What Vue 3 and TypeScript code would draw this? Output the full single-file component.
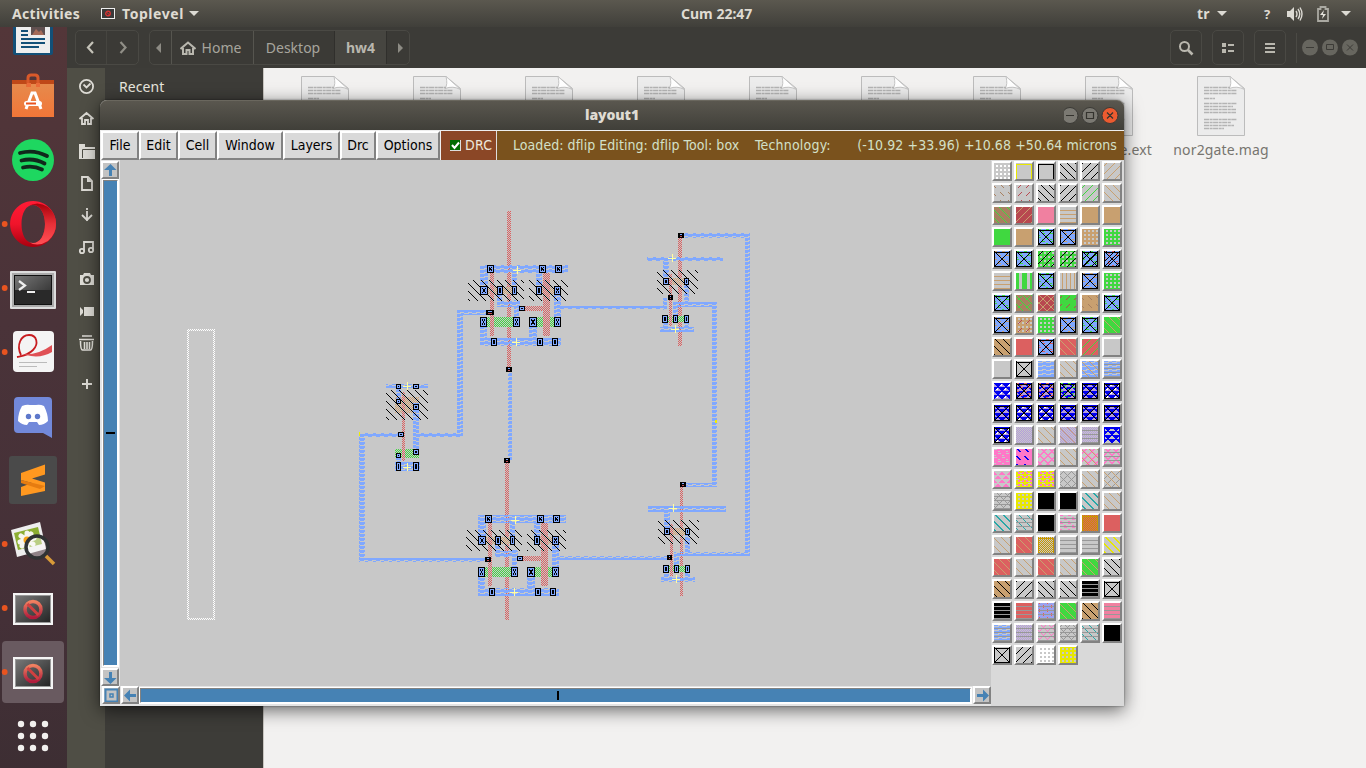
<script setup lang="ts">
type Box = [number, number, number, number]

const menus = [
  { t: 'File', w: 38 }, { t: 'Edit', w: 39 }, { t: 'Cell', w: 39 }, { t: 'Window', w: 66 },
  { t: 'Layers', w: 57 }, { t: 'Drc', w: 36 }, { t: 'Options', w: 64 },
]
const files = ['', '', '', '', '', '', '', 'nor2gate.ext', 'nor2gate.mag']

const colors: Record<string, string> = {
  k: '#000', g: '#40d840', t: '#c8a070', r: '#dc6060', R: '#b84850', n: '#a88060', b: '#80a8ff', B: '#0000f0',
  p: '#ff78c8', P: '#f080a0', y: '#e8e800', Y: '#c89800', e: '#989898', l: '#b49cdc', T: '#28a8a8', W: '#fff', c: '#c8c8c8',
}

/* One string per palette row: cells split by commas, layers by spaces; operator letter, then colour letter. */
const palette: string[] = [
  'qW,by,bk,dk,sk,st',
  'Dn,SR,dk,sk,sg,dt',
  'fn dg,fR st,fP,ht,ft,ft',
  'fg,ft,fb ig xk,fb it xk,ft oc,fg oc',
  'fb it xk,fb ig xk,fg oc sk,fg oc SR sk,fb ig xk sk,fb ir xk sk',
  'ht,fg uc,fb ig xk,vt,fb it xk,fg oc',
  'fb ig xk,fn dg Sg,fR dt st,fg SR,ft Dn,fb ig xk',
  'fb it xk,ft oc SR,fg oc,fb it xk,fb ig xk,fg dt',
  'ft dk,fr,fb ir xk,fr dt,fr sg,fc',
  'fc,xk,mb,dt,mb dt,mb he',
  'fl oW wB,fl wB ir xk,fl wB ir xk,fl wB ig xk,fl wB xk,fl oW wB xk',
  'fl ig wB xk,fl oW wB xk,fl oW wB xk,fl wB xk,fl wB xk,fl ig wB xk',
  'fl oW wB xk,cl,dt,cl dt,cl he,wB bB',
  'fp ic,fp DB NB,ap zp,dt,ap dt zp,ap zp he',
  'fp wc,fy op ic,fy op ic,ae,dt,ae dt',
  'ae he,fy oc,fk,fk,dT nT,dt',
  'dT nT,dT he,fk,hk ip he,fr cY bY,fr',
  'dt,fr dt,cY bY,he,he,dy ny',
  'fr dt,dt,fr dt,dt,fg dt,dk',
  'ft dk,sk,dk,dk,fk he,xk',
  'fk he,fr he,fb ir cl he,fg dt,ft dk,fP he',
  'mb he,cl he,ap he,ae he,dT he,fk',
  'xk,sk,fW oc,fy oc',
]
const swatches = palette.flatMap(row => row.split(',').map(c => c.split(' ')))

/* Diagonal stipples are aligned to the screen (X, Y); the others to the swatch (x, y). */
function lit(op: string, x: number, y: number, X: number, Y: number): boolean {
  const down = (X - Y) % 8
  const up = (X + Y) % 8
  switch (op) {
    case 'f': return true
    case 'd': return down === 0
    case 'n': return down === 1
    case 's': return up === 5
    case 'D': return down === 0 && Y % 8 < 4
    case 'N': return down === 1 && Y % 8 < 4
    case 'S': return up === 5 && Y % 8 < 4
    case 'h': return y % 4 === 3
    case 'v': return x % 4 === 2
    case 'u': return (x >= 3 && x < 6) || (x >= 11 && x < 14)
    case 'b': return y > 0 && (x === 0 || x === 15 || y === 1)
    case 'x': return x === 0 || x === 15 || y === 1 || y === 15 || x === y || x + y === 15
    case 'm': return y % 4 === 2 || y % 4 === 3 || (y % 4 === 0 && x % 8 < 4) || (y % 4 === 1 && x % 8 > 4)
    case 'o': return x % 4 >= 2 && (y % 4 === 1 || y % 4 === 2)
    case 'q': return x % 4 > 1 && y % 4 > 1
    case 'i': return (y % 4 === 0 && (x + y) % 8 < 3) || (y % 4 === 2 && (x + y) % 8 > 5)
    case 'c': return (X + Y) % 2 === 1
    case 'w': {
      const c = (x + (Math.floor(y / 4) % 2) * 4) % 8
      return Math.abs(c - 3.5) < 4 - (y % 4)
    }
    case 'a': return down === 0 || up === 6
    case 'z': return down === 1 || up === 7
  }
  return false
}
const cache: Record<string, string> = {}
function cells(op: string, index: number): string {
  const ox = 994 + (index % 6) * 22
  const oy = 163 + Math.floor(index / 6) * 22
  const key = `${op}${ox % 8}${oy % 8}`
  if (cache[key]) return cache[key]
  const on = (x: number, y: number) => lit(op, x, y, ox + x, oy + y)
  let d = ''
  for (let y = 0; y < 16; y++) {
    for (let x = 0; x < 16; x++) {
      if (!on(x, y)) continue
      const start = x
      while (x < 16 && on(x, y)) x++
      d += `M${start} ${y}h${x - start}v1h${start - x}z`
    }
  }
  return (cache[key] = d)
}

interface Cell { dx: number; dy: number; metal: Box[]; poly: Box[]; ndiff: Box[]; pdiff: Box[]; well: Box[]; contacts: Box[]; marks: [number, number][] }
const flop = {
  metal: [[480, 265, 88, 8], [480, 265, 8, 26], [512, 272, 5, 20], [536, 272, 6, 20], [497, 287, 5, 20], [497, 301, 23, 6], [514, 300, 5, 22], [554, 287, 7, 35],
    [480, 338, 81, 8], [480, 317, 7, 29], [529, 317, 8, 23]] as Box[],
  poly: [[490, 272, 4, 64], [543, 273, 7, 63], [520, 306, 25, 5]] as Box[],
  ndiff: [[485, 317, 31, 10], [533, 317, 24, 10]] as Box[],
  pdiff: [[486, 287, 26, 7], [540, 287, 15, 7]] as Box[],
  well: [[468, 280, 56, 21], [529, 280, 39, 21]] as Box[],
  contacts: [[487, 265, 7, 8], [539, 265, 7, 8], [555, 265, 7, 8], [480, 286, 8, 9], [497, 286, 6, 9], [512, 286, 5, 9], [536, 286, 6, 9], [554, 286, 7, 9],
    [519, 306, 6, 5], [480, 317, 7, 10], [513, 317, 7, 10], [529, 317, 8, 10], [554, 317, 7, 10], [491, 338, 6, 8], [537, 338, 6, 8], [552, 338, 6, 8]] as Box[],
  marks: [[517, 270], [516, 342]] as [number, number][],
}
const gate = {
  metal: [[663, 260, 6, 24], [684, 282, 5, 20], [663, 298, 4, 12], [673, 302, 44, 5], [673, 302, 5, 18], [660, 327, 34, 5], [663, 320, 5, 10], [684, 320, 5, 10]] as Box[],
  poly: [[669, 274, 3, 52]] as Box[],
  ndiff: [[668, 316, 17, 6]] as Box[],
  pdiff: [[672, 278, 13, 7]] as Box[],
  well: [[657, 270, 41, 24]] as Box[],
  contacts: [[663, 278, 6, 7], [684, 278, 5, 7], [662, 315, 6, 8], [673, 315, 5, 8], [684, 315, 5, 8]] as Box[],
  marks: [[672, 258], [675, 329]] as [number, number][],
}
const gate2 = { ...gate, metal: gate.metal.filter((_, i) => i !== 3 && i !== 2) }
const inv: Cell = {
  dx: 0, dy: 0,
  metal: [[386, 384, 42, 4], [396, 386, 5, 16], [413, 403, 6, 50], [395, 462, 25, 9], [396, 456, 5, 6]],
  poly: [[402, 392, 3, 69]], ndiff: [[395, 449, 24, 9]], pdiff: [[395, 397, 24, 16]], well: [[386, 390, 42, 30]],
  contacts: [[396, 384, 5, 5], [413, 384, 6, 5], [396, 399, 5, 5], [413, 404, 6, 6], [398, 432, 6, 5], [396, 453, 5, 5], [413, 449, 6, 6], [396, 462, 5, 9], [413, 462, 6, 9]],
  marks: [[407, 386], [407, 467]],
}
const wires: Box[] = [
  [457, 310, 33, 5], [457, 310, 6, 127], [554, 306, 112, 3], [508, 369, 4, 92], [416, 433, 47, 4], [359, 433, 41, 4], [359, 437, 6, 125], [359, 558, 128, 4],
  [552, 556, 117, 4], [680, 233, 70, 5], [745, 234, 5, 322], [674, 552, 76, 4], [647, 257, 76, 4], [712, 302, 5, 185], [682, 483, 35, 4], [648, 506, 78, 6],
]
const polyLines: Box[] = [[507, 211, 4, 160], [505, 460, 4, 160], [678, 236, 4, 110], [680, 484, 3, 112]]
const loose: Box[] = [[506, 367, 6, 5], [504, 458, 6, 5], [678, 233, 6, 5], [680, 482, 6, 5], [486, 310, 8, 5], [485, 557, 6, 5], [668, 295, 5, 5], [667, 555, 5, 5]]
const layoutCells: Cell[] = [
  { dx: 0, dy: 0, ...flop }, { dx: -2, dy: 250, ...flop }, { dx: 0, dy: 0, ...gate }, { dx: 1, dy: 250, ...gate2 }, inv,
]
const kinds = [['pdiff', 'pd'], ['ndiff', 'nd'], ['poly', 'po'], ['metal', 'me'], ['well', 'we']] as const
</script>

<template>
  <div class="desktop">
    <header class="topbar">
      <span class="act">Activities</span>
      <svg class="appicon" width="14" height="11"><rect x=".5" y=".5" width="13" height="10" fill="#3a3a3a" stroke="#eee" /><circle cx="7" cy="5.500" r="2.300" fill="none" stroke="#d33" stroke-width="1.300" /><path d="M5.500 4l3 3" stroke="#d33" /></svg>
      <span class="top">Toplevel</span><i class="caret" />
      <span class="clock">Cum 22:47</span>
      <span class="lang">tr</span><i class="caret" />
      <span class="q">?</span>
      <svg class="vol" width="17" height="16"><path d="M1 5h3l4-4v14l-4-4H1z" fill="#dcdad3" /><path d="M10 5q2 3 0 6M12 3q3.500 5 0 10M14 1.500q4 6.500 0 13" fill="none" stroke="#dcdad3" stroke-width="1.400" /></svg>
      <svg class="bat" width="12" height="16"><path d="M1 3h2.500V1h5v2H11v12H1z" fill="none" stroke="#aaa9a2" stroke-width="1.800" /><path d="M7 4L3 9h3l-1 4 4-5H6z" fill="#e5e3dc" /></svg>
      <i class="caret last" />
    </header>

    <nav class="dock">
      <svg width="67" height="741" viewBox="0 27 67 741">
        <defs>
          <linearGradient id="or" x2="0" y2="1"><stop stop-color="#e68a4c" /><stop offset="1" stop-color="#f27638" /></linearGradient>
          <linearGradient id="dk" x2="1" y2="1"><stop stop-color="#777" /><stop offset="1" stop-color="#252525" /></linearGradient>
          <linearGradient id="op" x2="0" y2="1"><stop stop-color="#ff1b35" /><stop offset=".5" stop-color="#f0142b" /><stop offset="1" stop-color="#a8000f" /></linearGradient>
          <linearGradient id="op2" x2="0" y2="1"><stop stop-color="#a8000a" /><stop offset=".5" stop-color="#e83038" /><stop offset="1" stop-color="#ff5055" /></linearGradient>
          <linearGradient id="ban" x2="0" y2="1"><stop stop-color="#f08060" /><stop offset="1" stop-color="#b01c3c" /></linearGradient>
          <g id="toplevel">
            <rect x="13" y="0" width="40" height="32" fill="#f5f5f5" /><rect x="15" y="2" width="36" height="28" fill="#999" /><rect x="16" y="3" width="34" height="26" fill="url(#dk)" />
            <circle cx="33" cy="16.500" r="8" fill="none" stroke="url(#ban)" stroke-width="3.500" /><path d="M27.500 11l11 11" stroke="#d04040" stroke-width="3" />
          </g>
        </defs>
        <path d="M13 27h40v26q0 2-2 2H15q-2 0-2-2z" fill="#125078" /><path d="M16 27h34v26H16z" fill="#eee" />
        <path d="M21 31h7M21 35h7M21 39h24M21 43h24M21 47h18" stroke="#125078" stroke-width="2" /><path d="M31 27h14v8H31z" fill="#605050" /><path d="M32 35l4-6 3 3 2-2 3 5z" fill="#a66b58" />
        <path d="M12 80h42v5H12z" fill="#bf4818" /><path d="M12 84h42v33H12z" fill="url(#or)" /><path d="M28 87V78q0-3 3-3h4q3 0 3 3v9" fill="none" stroke="#d9592a" stroke-width="3" /><path d="M27 83h4v4h-4zM36 83h4v4h-4z" fill="#e96a38" />
        <path d="M26 109l6-16h3l6 16" fill="none" stroke="#fff" stroke-width="3" /><rect x="24" y="101" width="18" height="5" rx="2.500" fill="#fff" /><path d="M26 103.500h10" stroke="#e95420" stroke-width="2" />
        <circle cx="33" cy="160" r="21" fill="#1ed760" /><path d="M20 153q14-4 27 3M21.500 160.500q12-3 23 3M23 167.500q10-2.500 19 2" fill="none" stroke="#10291b" stroke-width="3.800" stroke-linecap="round" />
        <path fill-rule="evenodd" fill="url(#op)" d="M33 201a23 23 0 1 0 .1 0zM33 205c7 0 12 8 12 19s-5 19-12 19-11.500-8-11.500-19 4.500-19 11.500-19z" />
        <path fill="url(#op2)" d="M27 207q10-7 21 0 8 7 8 17t-8 17q-11 7-21 0 3 2 6 2c7 0 12-8 12-19s-5-19-12-19q-3 0-6 2z" />
        <rect x="10" y="271" width="46" height="38" rx="1" fill="#ddd" /><rect x="12" y="273" width="42" height="34" fill="#aaa" /><rect x="14" y="275" width="38" height="30" fill="#111" /><rect x="15" y="276" width="36" height="28" fill="url(#dk)" /><path d="M15 290h36v14H15z" fill="#292929" />
        <path d="M19 281l6 4.500-6 4.500M27 292h8" fill="none" stroke="#eee" stroke-width="2.200" />
        <rect x="13" y="331" width="41" height="41" rx="4" fill="#f4f4f4" /><path d="M21 355C16 345 21 335 29 335S39 344 33 350 22 356 17 357" fill="none" stroke="#c81c20" stroke-width="1.800" /><path d="M21 354q16 2 31-9v7q-12 7-26 3z" fill="#e05055" /><path d="M19 362.500h28M19 366.500h18" stroke="#bbb" />
        <path d="M18 397h30q4 0 4 4v37l-9-5H18q-4 0-4-4v-28q0-4 4-4z" fill="#7289da" /><path d="M22 406q5-2 8-1h6q4-1 8 1 4 8 4 15-4 4-9 4l-2-3h-8l-2 3q-5 0-9-4 0-8 4-15z" fill="#fff" /><circle cx="28.500" cy="416.500" r="2.700" fill="#5e78cb" /><circle cx="37.500" cy="416.500" r="2.700" fill="#5e78cb" />
        <rect x="9" y="456" width="48" height="48" rx="3" fill="#4a4a4a" /><path d="M21 473l24-8.500v10l-13 4 13 4v8.500l-24 5v-9l11-4-11-3z" fill="#ff9820" /><path d="M21 480l24 6-5 3-19-6z" fill="#e67c10" />
        <path d="M11 530l29-8 6 27-29 8z" fill="#eee" /><path d="M14 533l24-6 4 17-24 6z" fill="#8cae32" /><g stroke="#f6f6ee" stroke-width="5" stroke-linecap="round"><path d="M21 536l12 8M27 533v14M20 542l14-4M22 546l9-12" /></g><circle cx="27" cy="540" r="3.500" fill="#f6a316" /><circle cx="37" cy="547" r="11" fill="#ffffff66" stroke="#303334" stroke-width="3.500" /><path d="M46 556l8 8" stroke="#d99b38" stroke-width="3.500" />
        <rect x="2" y="641" width="62" height="62" rx="4" fill="#695a60" />
        <use href="#toplevel" y="593" /><use href="#toplevel" y="657" />
        <g fill="#e95420"><circle v-for="y in [224, 288, 352, 544, 608, 672]" :key="y" cx="4.700" :cy="y" r="2.900" /></g>
        <g fill="#f2f0ee"><circle v-for="i in 9" :key="i" :cx="21 + ((i - 1) % 3) * 12" :cy="724 + Math.floor((i - 1) / 3) * 12" r="3.200" /></g>
      </svg>
    </nav>

    <section class="nautilus">
      <div class="toolbar">
        <div class="grp nav"><svg width="64" height="35"><path d="M18 12l-5 5.500 5 5.500" fill="none" stroke="#c4c2b8" stroke-width="2.200" /><path d="M45.500 12l5 5.500-5 5.500" fill="none" stroke="#908e86" stroke-width="2.200" /><path d="M31.500 0v35" stroke="#464540" /></svg></div>
        <div class="grp crumbs">
          <span class="arr"><svg width="5" height="10"><path d="M5 0v10L0 5z" fill="#8d8b84" /></svg></span>
          <span class="home"><svg width="16" height="14" fill="none" stroke="#b9b7ae" stroke-width="2"><path d="M.5 8L8 1.500 15.500 8M3 7v6h3.500V9h3v4H13V7" /></svg>Home</span>
          <span class="desk">Desktop</span><b>hw4</b>
          <span class="arr r"><svg width="5" height="10"><path d="M0 0v10l5-5z" fill="#8d8b84" /></svg></span>
        </div>
        <div class="grp tb first"><svg width="16" height="16" fill="none" stroke="#b9b7ae" stroke-width="2"><circle cx="6.500" cy="6.500" r="4.500" /><path d="M10 10l4.500 4.500" stroke-width="2.600" /></svg></div>
        <div class="grp tb"><svg width="12" height="12" fill="#b9b7ae"><path d="M0 1h4v4H0zM0 7h4v4H0zM6 2h6v2H6zM6 8h6v2H6z" /></svg></div>
        <div class="grp tb"><svg width="10" height="10" fill="#b9b7ae"><path d="M0 0h10v2H0zM0 4h10v2H0zM0 8h10v2H0z" /></svg></div>
        <svg class="wbtns" width="66" height="30"><path d="M2.500 0v30" stroke="#4b4a45" /><g fill="#67665f"><circle cx="16" cy="14.500" r="8" /><circle cx="36" cy="14.500" r="8" /><circle cx="56" cy="14.500" r="8" /></g><path d="M12 14.500h8M32.500 11.500h7v5h-7zM53 11.500l6 6M59 11.500l-6 6" fill="none" stroke="#3c3b37" /></svg>
      </div>
      <div class="body">
        <div class="icons">
          <svg width="38" height="330" viewBox="67 68 38 330" fill="none" stroke="#dedcd6" stroke-width="1.800">
            <circle cx="86.500" cy="86.500" r="6.600" /><path d="M83.500 84.500l3 3 4-4" />
            <path d="M79.500 119l7-6 7 6M82 118v6h3v-4h3v4h3v-6" />
            <path d="M79 144h6v3h10v12H79z" fill="#dedcd6" stroke="none" /><path d="M82.500 158v-8.500H95" stroke="#4f4e45" stroke-width="1" />
            <path d="M82 177h6l4 4v9H82z" /><path d="M87 177v5h5z" fill="#dedcd6" stroke="none" />
            <path d="M87 208v2M87 211v10M82 215l5 5 5-5" />
            <path d="M84 251v-9h9v8" /><circle cx="82" cy="251" r="2.200" /><circle cx="91" cy="250" r="2.200" />
            <g stroke="none" fill="#dedcd6"><path d="M80 275h3l1-2h6l1 2h3v10H80z" /><path d="M80 307l3 3v3l-3 3zM84 307h10v9H84z" /></g><circle cx="87" cy="280" r="3" stroke="#4f4e45" />
            <path d="M79 339.500h15M82 336h10M80.500 341q0 9 2 9h8q2 0 2-9M84.500 342v7M87 342v7M89.500 342v7" stroke-width="1.600" />
            <path d="M87 379v10M82 384h10" stroke-width="2" />
          </svg>
        </div>
        <div class="places">Recent</div>
        <div class="files">
          <figure v-for="(f, i) in files" :key="i">
            <svg width="48" height="60"><path d="M.5.500H33l14.500 12V59.500H.5z" fill="#ececec" stroke="#bcbcbc" /><path d="M33 .5q2 8-1 12 8-3 15.500 1z" fill="#fff" stroke="#c4c4c4" /><path d="M7 11.500h26M7 14.500h33M7 17.500h33M7 22.500h11M7 27.500h33M7 30.500h29M7 33.500h32M7 36.500h32M7 43.500h33M7 46.500h27M7 49.500h30M7 52.500h20" stroke="#b4b4b4" stroke-width="1.500" stroke-dasharray="5 .6 3 .5" /></svg>
            <figcaption>{{ f }}</figcaption>
          </figure>
        </div>
      </div>
    </section>

    <section class="magic">
      <div class="title"><b>layout1</b>
        <svg width="60" height="20"><g fill="#7b7972" stroke="#3a3935"><circle cx="6" cy="9.500" r="8" /><circle cx="26" cy="9.500" r="8" /><circle cx="46" cy="9.500" r="8" fill="#ec5b30" /></g><path d="M2 9.500h8M22.500 6.500h7v6h-7zM43 6.500l6 6M49 6.500l-6 6" fill="none" stroke="#34332e" stroke-width="1.200" /></svg>
      </div>
      <div class="menubar">
        <span v-for="m in menus" :key="m.t" class="menu" :style="{ width: m.w + 'px' }">{{ m.t }}</span>
        <span class="drc"><svg width="11" height="11"><path d="M0 0h11v11H0z" fill="#ddd" /><path d="M0 0h10v10H0z" fill="#006b00" /><path d="M2 5l2.500 3L9 2.500" fill="none" stroke="#fff" stroke-width="2" /></svg>DRC</span>
        <span class="status"><span class="s1"><span>Loaded: dflip Editing: dflip Tool: box</span><span class="tech">Technology:</span></span><span class="s2">(-10.92 +33.96) +10.68 +50.64 microns</span></span>
      </div>
      <div class="work">
        <div class="vbar">
          <span class="btn"><svg width="15" height="15"><path d="M7.500 1l6 6H9v6H6V7H1z" fill="#4682b4" /></svg></span>
          <span class="trough v"><i /></span>
          <span class="btn"><svg width="15" height="15"><path d="M7.500 14l6-6H9V2H6v6H1z" fill="#4682b4" /></svg></span>
        </div>
        <svg class="canvas" width="871" height="526" viewBox="120 160 871 526" shape-rendering="crispEdges">
          <defs>
            <pattern v-for="[id, c] in [['po', '#dc6060'], ['nd', '#40d840'], ['pd', '#d0a070'], ['wh', '#ffffff']]" :id="id" :key="id" width="2" height="2" patternUnits="userSpaceOnUse"><path d="M1 0h1v1H1zM0 1h1v1H0z" :fill="c" /></pattern>
            <pattern id="me" width="8" height="4" patternUnits="userSpaceOnUse"><path d="M0 0h4v1H0zM5 1h3v1H5zM0 2h8v2H0z" fill="#80a8ff" /></pattern>
            <pattern id="we" width="8" height="8" patternUnits="userSpaceOnUse"><path d="M1 0h1v1H1zM2 1h1v1H2zM3 2h1v1H3zM4 3h1v1H4zM5 4h1v1H5zM6 5h1v1H6zM7 6h1v1H7zM0 7h1v1H0z" /></pattern>
          </defs>
          <rect v-for="(b, i) in polyLines" :key="'p' + i" :x="b[0]" :y="b[1]" :width="b[2]" :height="b[3]" fill="url(#po)" />
          <rect v-for="(b, i) in wires" :key="'w' + i" :x="b[0]" :y="b[1]" :width="b[2]" :height="b[3]" fill="url(#me)" />
          <g v-for="(c, n) in layoutCells" :key="n">
            <template v-for="[k, id] in kinds" :key="k"><rect v-for="(b, i) in c[k]" :key="i" :x="b[0] + c.dx" :y="b[1] + c.dy" :width="b[2]" :height="b[3]" :fill="`url(#${id})`" /></template>
            <g :transform="`translate(${c.dx} ${c.dy})`">
              <g v-for="(b, i) in c.contacts" :key="'c' + i"><rect :x="b[0] + .5" :y="b[1] + .5" :width="b[2] - 1" :height="b[3] - 1" fill="#80a8ff" stroke="#000" /><path :d="`M${b[0] + 2} ${b[1] + 2}l${b[2] - 4} ${b[3] - 4}M${b[0] + b[2] - 2} ${b[1] + 2}l${4 - b[2]} ${b[3] - 4}`" stroke="#000" /></g>
              <path v-for="(m, i) in c.marks" :key="'m' + i" :d="`M${m[0] - 4} ${m[1] + .5}h8M${m[0] + .5} ${m[1] - 4}v8`" stroke="#ffffa0" />
            </g>
          </g>
          <g v-for="(b, i) in loose" :key="'l' + i"><rect :x="b[0]" :y="b[1]" :width="b[2]" :height="b[3]" /><rect :x="b[0] + 2" :y="b[1] + 1" :width="b[2] - 4" height="1" fill="#80a8ff" /><rect :x="b[0] + 2" :y="b[1] + 3" :width="b[2] - 4" height="1" fill="#c05058" /></g>
          <path d="M359 432h1v4h-1zM715 420h2v3h-2z" fill="#ee0" />
          <path fill-rule="evenodd" d="M187 329h28v291h-28zM189 331v287h24V331z" fill="url(#wh)" />
        </svg>
        <div class="palette">
          <svg v-for="(s, i) in swatches" :key="i" class="sw" width="16" height="16" shape-rendering="crispEdges"><path v-for="(l, j) in s" :key="j" :d="cells(l[0], i)" :fill="colors[l[1]]" /></svg>
        </div>
        <div class="hbar">
          <span class="btn"><svg width="15" height="15"><path d="M1.500 1.500h12v12h-12z" fill="none" stroke="#4682b4" stroke-width="2" /><path d="M6 6h3v3H6z" fill="none" stroke="#4682b4" stroke-width="1.500" /></svg></span>
          <span class="btn"><svg width="15" height="15"><path d="M1 7.500l6-6V6h6v3H7v4.500z" fill="#4682b4" /></svg></span>
          <span class="trough h"><i /></span>
          <span class="btn"><svg width="15" height="15"><path d="M14 7.500l-6-6V6H2v3h6v4.500z" fill="#4682b4" /></svg></span>
        </div>
      </div>
    </section>
  </div>
</template>

<style>
body { margin: 0; overflow: hidden; }
</style>
<style scoped>
.desktop { position: relative; width: 1366px; height: 768px; overflow: hidden; background: #3d3c38; font: 14.500px "Noto Sans", "Open Sans", sans-serif; color: #dfdbd2; display: grid; grid-template: 27px 741px / 67px 1299px; }
.desktop * { box-sizing: border-box; }
svg { display: block; flex: none; }
.topbar { grid-column: 1 / 3; display: flex; align-items: center; background: linear-gradient(#5b584f, #403f3a); font-weight: 700; font-size: 14px; line-height: 20px; white-space: nowrap; }
.topbar span { flex: none; }
.act { width: 68px; margin-left: 12px; letter-spacing: .3px; }
.appicon { margin-left: 21px; }
.top { width: 62px; margin-left: 7px; letter-spacing: .55px; }
.caret { border: 5px solid transparent; border-top-color: #dcdad3; border-bottom: 0; margin-left: 5px; flex: none; }
.clock { margin-left: 482px; width: 74px; letter-spacing: 0; }
.lang { margin-left: 442px; width: 13px; letter-spacing: .2px; }
.lang + .caret { margin-left: 7px; }
.q { margin-left: 37px; width: 10px; font-size: 13px; }
.vol { margin-left: 12px; }
.bat { margin-left: 14px; }
.last { margin-left: 12px; }
.dock { background: linear-gradient(#533639, #4a3339 40%, #443037 80%, #3d2e33); }
.nautilus { display: flex; flex-direction: column; min-width: 0; }
.toolbar { height: 41px; flex: none; background: #3c3b37; display: flex; align-items: center; padding-left: 8px; color: #a7a59d; }
.grp { height: 35px; border: 1px solid #4a4944; border-radius: 5px; background: #3b3a36; display: flex; align-items: center; justify-content: center; overflow: hidden; flex: none; }
.nav { width: 64px; }
.crumbs { margin-left: 10px; width: 261px; justify-content: flex-start; font-size: 14px; }
.crumbs > * { height: 35px; display: flex; align-items: center; justify-content: center; flex: none; }
.arr { width: 21px; padding-right: 4px; }
.arr.r { padding: 0 0 0 5px; }
.home { width: 82px; border-left: 1px solid #56554f; gap: 6px; padding-right: 4px; }
.desk { width: 81px; border-left: 1px solid #56554f; padding-right: 2px; }
.crumbs b { width: 53px; background: #464540; border-left: 1px solid #302f2c; border-right: 1px solid #302f2c; color: #b9b7ae; }
.tb { width: 32px; margin-left: 10px; }
.tb.first { margin-left: 760px; }
.wbtns { margin-left: 8px; }
.body { flex: 1; display: flex; }
.icons { width: 38px; background: #4f4e45; }
.places { width: 159px; background: #3d3c38; border-right: 1px solid #c8c5c0; padding: 9px 0 0 14px; font-size: 14px; line-height: 20px; color: #e8e6df; letter-spacing: .1px; }
.files { flex: 1; background: #f2f1f0; display: flex; padding-left: 5px; }
figure { margin: 8px 0 0; width: 112px; flex: none; display: flex; flex-direction: column; align-items: center; }
figcaption { margin-top: 4px; color: #77756f; font-size: 14px; line-height: 20px; letter-spacing: .15px; }
.magic { position: absolute; left: 100px; top: 100px; width: 1024px; height: 606px; border-radius: 7px 7px 0 0; background: #d9d9d9; box-shadow: 0 4px 18px #0009, 0 0 2px #0008; font-family: "DejaVu Sans Condensed", "DejaVu Sans", sans-serif; font-stretch: condensed; font-size: 14px; color: #000; display: grid; grid-template-rows: 30px 30px 546px; }
.title { border-radius: 7px 7px 0 0; background: linear-gradient(#5a574f, #403f39); border-top: 1px solid #6a675e; display: grid; grid-template-columns: 60px 1fr 60px; align-items: center; color: #dfdbd2; font: 700 14px "Noto Sans", sans-serif; }
.title b { grid-column: 2; text-align: center; line-height: 20px; margin-top: -2px; letter-spacing: -.1px; }
.title svg { grid-column: 3; }
.menubar { display: flex; padding: 1px 0 0 1px; background: #eee; }
.menu { display: flex; align-items: center; justify-content: center; height: 29px; padding-bottom: 1px; background: #d9d9d9; border: 2px solid; border-color: #fff #828282 #828282 #fff; flex: none; }
.drc { width: 56px; margin-left: 1px; background: #8b4726; color: #eee8dc; display: flex; align-items: center; justify-content: flex-start; gap: 4px; padding: 0 0 1px 9px; letter-spacing: .2px; border-right: 1px solid #ddd; flex: none; }
.status { width: 627px; flex: none; background: #7a521d; color: #d3e0c8; display: flex; align-items: center; justify-content: space-between; padding: 0 7px 1px 16px; white-space: nowrap; }
.s1 { display: flex; letter-spacing: .05px; }
.tech { margin-left: 9px; letter-spacing: .2px; }
.s1 > span:first-child { width: 233px; }
.s2 { letter-spacing: .1px; }
.work { display: grid; grid-template: 526px 20px / 20px 871px 133px; }
.vbar { display: flex; flex-direction: column; align-items: center; background: #e4e4e4; padding-top: 1px; }
.btn { width: 18px; height: 18px; flex: none; background: #c3c3c3; border: 2px solid; border-color: #fff #828282 #828282 #fff; overflow: hidden; display: flex; align-items: center; justify-content: center; }
.trough { background: #4682b4; border: 1px solid; border-color: #828282 #fff #fff #828282; outline: 1px solid #fff; display: flex; align-items: center; justify-content: center; flex: none; }
.trough i { background: #000; }
.trough.v { width: 15px; height: 486px; margin: 1px 0 2px; }
.v i { width: 9px; height: 2px; margin-top: 20px; }
.canvas { background: #c8c8c8; }
.palette { grid-row: 1 / 3; grid-column: 3; background: #d9d9d9; padding: 1px 0 0 1px; display: grid; grid-template-columns: repeat(6, 22px); grid-auto-rows: 22px; align-content: start; }
.sw { box-sizing: content-box !important; background: #c8c8c8; border: 2px solid; border-color: #fff #828282 #828282 #fff; }
.hbar { grid-column: 1 / 3; display: flex; align-items: flex-start; padding: 0 0 0 2px; background: #e4e4e4; }
.hbar .btn + .btn { margin-left: 1px; }
.trough.h { width: 831px; height: 15px; margin: 2px 2px 0 1px; }
.h i { width: 2px; height: 9px; margin-left: 5px; }
</style>
